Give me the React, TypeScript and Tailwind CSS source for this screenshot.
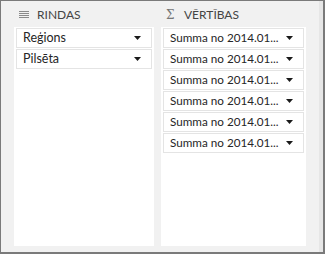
const Arrow = () => (
  <svg width="7" height="4" viewBox="0 0 7 4" className="shrink-0">
    <path d="M0 0h7L3.5 4z" fill="#1a1a1a" />
  </svg>
);

const Field = ({ label }: { label: string }) => (
  <div className="flex h-[20px] items-center justify-between border border-[#e4e4e4] bg-white pl-[6px] pr-[10px]">
    <span className="whitespace-nowrap text-[12.5px] leading-none text-[#262626]">{label}</span>
    <Arrow />
  </div>
);

const RowsIcon = () => (
  <svg width="10" height="8" viewBox="0 0 10 8" className="shrink-0">
    <rect x="0" y="0" width="10" height="1" fill="#8a8a8a" />
    <rect x="0" y="2" width="10" height="1" fill="#8a8a8a" />
    <rect x="0" y="4" width="10" height="1" fill="#8a8a8a" />
    <rect x="0" y="6" width="10" height="1" fill="#8a8a8a" />
  </svg>
);

const App = () => {
  const values = Array.from({ length: 6 }, () => "Summa no 2014.01...");

  return (
    <div
      className="flex h-[254px] w-[325px] border-t border-l border-r-2 border-b-2 border-[#7a7a7a] bg-[#f1f1f1]"
      style={{ fontFamily: 'Lato, "Open Sans", sans-serif' }}
    >
      <div className="flex flex-1 gap-[7px] pl-[13px] pb-[6px]">
        {/* Rindas */}
        <div className="flex w-[140px] flex-col">
          <div className="flex h-[26px] items-center gap-[8px] pl-[5px] pt-[1px]">
            <RowsIcon />
            <span className="whitespace-nowrap text-[12px] text-[#444]">RINDAS</span>
          </div>
          <div className="flex flex-1 flex-col gap-[1px] bg-white px-[2px] pt-[1px]">
            <Field label="Reģions" />
            <Field label="Pilsēta" />
          </div>
        </div>
        {/* Vērtības */}
        <div className="flex w-[145px] flex-col">
          <div className="flex h-[26px] items-center gap-[12px] pl-[5px] pt-[1px]">
            <span
              className="w-[6px] text-[12px] leading-none text-[#777]"
              style={{ fontFamily: '"DejaVu Serif", serif' }}
            >
              Σ
            </span>
            <span className="whitespace-nowrap text-[12px] text-[#444]">VĒRTĪBAS</span>
          </div>
          <div className="flex flex-1 flex-col gap-[1px] bg-white px-[2px] pt-[1px]">
            {values.map((v, i) => (
              <div
                key={i}
                className="flex h-[20px] items-center justify-between border border-[#e4e4e4] bg-white pl-[6px] pr-[10px]"
              >
                <span className="whitespace-nowrap text-[11.7px] leading-none text-[#262626]">{v}</span>
                <Arrow />
              </div>
            ))}
          </div>
        </div>
      </div>
      <div className="w-[4px] bg-[#e6e6e6]" />
    </div>
  );
};

export default App;
